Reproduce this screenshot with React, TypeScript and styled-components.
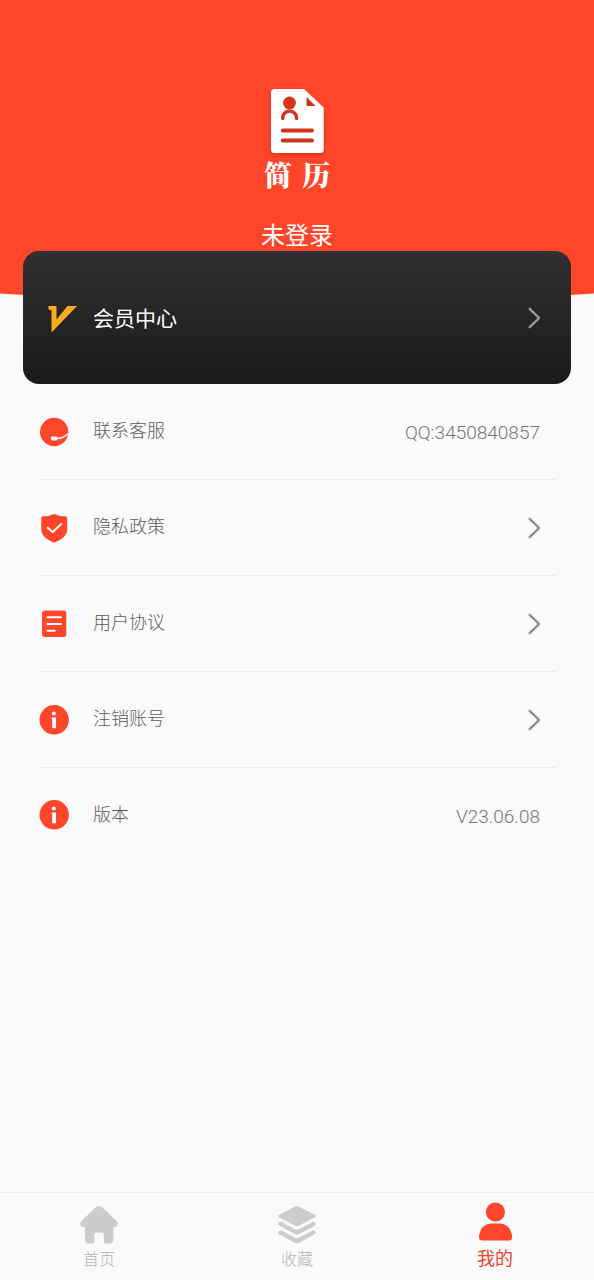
import React from "react";
import styled, { createGlobalStyle } from "styled-components";

const red = "#ff462b";

const GlobalStyle = createGlobalStyle`
  *, *::before, *::after { box-sizing: border-box; }
  body {
    margin: 0;
    background: #fafafa;
    font-family: Roboto, "Noto Sans CJK SC", sans-serif;
  }
  button { font: inherit; border: 0; background: none; cursor: pointer; }
`;

const Page = styled.div`
  min-height: 100vh;
  display: flex;
  flex-direction: column;
`;

const Header = styled.header`
  display: flex;
  flex-direction: column;
  align-items: center;
  padding: 84px 0 52px;
  background: ${red};
  color: #fff;
  clip-path: ellipse(200% 100% at 50% 0);
`;

const Brand = styled.h1`
  display: flex;
  gap: 10px;
  margin: 0 0 30px;
  font: 900 28px/30px "Noto Serif CJK SC", "Noto Serif SC", "Noto Sans CJK SC", serif;
`;

const UserName = styled.div`
  padding-top: 2px;
  font-size: 24px;
  line-height: 30px;
`;

const Main = styled.main`
  flex: 1;
`;

const MemberCard = styled.button`
  position: relative;
  display: flex;
  align-items: center;
  width: calc(100% - 46px);
  height: 133px;
  margin: -52px 23px 0;
  padding: 0 30px 0 24px;
  border-radius: 16px;
  background: linear-gradient(#303030, #1b1b1b);
  color: #fff;
  text-align: left;
`;

const MemberLabel = styled.span`
  flex: 1;
  margin-left: 16px;
  padding-top: 2px;
  font-size: 21px;
  line-height: 32px;
`;

const Menu = styled.ul`
  list-style: none;
  margin: 0;
  padding: 0 38px;
`;

const MenuItem = styled.li`
  height: 96px;
  border-bottom: 1px solid #ebebeb;
  &:last-child { height: 94px; border-bottom: 0; }
`;

const Row = styled.button`
  display: flex;
  align-items: center;
  width: 100%;
  height: 100%;
  padding: 0 15px 0 1px;
  text-align: left;
`;

const RowLabel = styled.span`
  flex: 1;
  margin-left: 24px;
  padding-bottom: 1px;
  color: #5c5c5c;
  font-size: 18px;
  font-weight: 300;
  line-height: 24px;
`;

const RowValue = styled.span`
  padding: 3px 1px 0 0;
  color: #777;
  font-size: 19px;
  font-weight: 300;
  line-height: 24px;
`;

const TabBar = styled.nav`
  position: sticky;
  bottom: 0;
  display: grid;
  grid-template-columns: repeat(3, 1fr);
  height: 88px;
  border-top: 1px solid #eee;
  background: #fafafa;
`;

const Tab = styled.button<{ $active?: boolean }>`
  display: flex;
  flex-direction: column;
  align-items: center;
  justify-content: flex-end;
  gap: ${(p) => (p.$active ? 5 : 3)}px;
  padding: 0 0 ${(p) => (p.$active ? 9 : 8)}px;
  color: ${(p) => (p.$active ? red : "#ccc")};
`;

const TabLabel = styled.span<{ $active?: boolean }>`
  color: ${(p) => (p.$active ? "#e8452f" : "#b4b4b4")};
  font-size: ${(p) => (p.$active ? 18 : 16)}px;
  font-weight: ${(p) => (p.$active ? 400 : 300)};
  line-height: 24px;
`;

const Chevron = ({ color = "#8c8c8c" }: { color?: string }) => (
  <svg width="14" height="22" viewBox="0 0 14 22" fill="none" aria-hidden="true">
    <path d="M2.700 1.800 12.100 11 2.700 20.200" stroke={color} strokeWidth="2.400" strokeLinecap="round" strokeLinejoin="round" />
  </svg>
);

const ResumeLogo = () => (
  <svg width="64" height="75" viewBox="0 0 64 75" aria-hidden="true">
    <defs>
      <filter id="logo-shadow" x="-20%" y="-20%" width="140%" height="140%">
        <feDropShadow dx="0" dy="2" stdDeviation="2" floodColor="#a81d08" floodOpacity=".45" />
      </filter>
    </defs>
    <path
      filter="url(#logo-shadow)"
      fill="#fff"
      d="M9.500 5H39L58.700 23.500V65.500Q58.700 69 55.200 69H9.500Q6 69 6 65.500V8.500Q6 5 9.500 5Z"
    />
    <path d="M41.500 13V22H50.500Z" fill="#cf321d" />
    <circle cx="24.500" cy="19" r="6.400" fill="#d7331b" />
    <path d="M17.700 34.500V34a6.900 7 0 0 1 13.800 0v.5" fill="none" stroke="#d7331b" strokeWidth="3.400" strokeLinecap="round" />
    <path d="M17.700 46.500H47M17.700 56.500H47" stroke="#cf321d" strokeWidth="3.800" strokeLinecap="round" />
  </svg>
);

const MemberIcon = () => (
  <svg width="30" height="30" viewBox="0 0 30 30" aria-hidden="true">
    <path d="M1.300 3H9.500V16.500L20.500 3H30L4.500 29.500V7H1.900Z" fill="#fbab1c" />
  </svg>
);

const IconFrame = ({ children }: { children: React.ReactNode }) => (
  <svg width="30" height="30" viewBox="0 0 30 30" fill="none" aria-hidden="true">
    {children}
  </svg>
);

const ServiceIcon = () => (
  <IconFrame>
    <circle cx="15.200" cy="15" r="14.200" fill={red} />
    <path d="M17.500 21.600C22 21.600 26 19.600 29.500 16.500" stroke="#fff" strokeWidth="1.500" />
    <rect x="12" y="19.600" width="6.500" height="3.800" rx="1.400" fill="#fff" />
  </IconFrame>
);

const ShieldIcon = () => (
  <IconFrame>
    <path
      d="M13.400 1.400Q15.200.4 17 1.400 21 3.500 26.500 3.200 28.200 3.200 28.200 5V16C28.200 22 23.500 26 17 29Q15.200 29.800 13.400 29C7 26 2.200 22 2.200 16V5Q2.200 3.200 3.900 3.200 9.400 3.500 13.400 1.400Z"
      fill={red}
    />
    <path d="M8.700 14.700 13.700 19 22.300 11" stroke="#fff" strokeWidth="1.900" strokeLinecap="round" strokeLinejoin="round" />
  </IconFrame>
);

const DocumentIcon = () => (
  <IconFrame>
    <rect x="3" y="1.500" width="24.300" height="26.500" rx="3" fill={red} />
    <path d="M8.500 8.300H22M8.500 15H22M8.500 21.700H15.800" stroke="#fff" strokeWidth="2" strokeLinecap="round" />
  </IconFrame>
);

const InfoIcon = () => (
  <IconFrame>
    <circle cx="15.200" cy="14.800" r="14.700" fill={red} />
    <circle cx="14.800" cy="8.400" r="2" fill="#fff" />
    <path d="M12.600 12.500H17V23.300H13.200V14H12.600Z" fill="#fff" />
  </IconFrame>
);

const HomeIcon = () => (
  <svg width="40" height="40" viewBox="0 0 40 40" fill="currentColor" aria-hidden="true">
    <path d="M16.800 2.200Q20 .3 23.200 2.200L37.800 16.200Q39.600 18 38.400 20.200 37.600 21.800 35.500 22H34.400V34.500Q34.400 38.500 30.500 38.500H26.500Q24.800 38.500 24.800 36.800V29.500Q24.800 27.500 22.800 27.500H17.200Q15.400 27.500 15.400 29.500V36.800Q15.400 38.500 13.700 38.500H10Q6 38.500 6 34.500V22H4.500Q2.400 21.800 1.500 20.200.3 18 2.200 16.200Z" />
  </svg>
);

const LayersIcon = () => (
  <svg width="40" height="40" viewBox="0 0 40 40" fill="currentColor" aria-hidden="true">
    <path d="M17.800 1.700Q20 .6 22.200 1.700L37.800 9.800Q39.800 11 37.800 12.200L22.200 20.500Q20 21.700 17.800 20.500L2.200 12.200Q.2 11 2.200 9.800Z" />
    <path d="M2 17.300 4.500 16.900 17.600 23.900Q20 25.200 22.400 23.900L35.500 16.900 38 17.300Q39.800 19 38 20.400L22.400 29Q20 30.200 17.600 29L2 20.400Q.2 19 2 17.300Z" />
    <path d="M2 25.900 4.500 25.500 17.600 32.500Q20 33.800 22.400 32.500L35.500 25.500 38 25.900Q39.800 27.600 38 29L22.400 37.700Q20 38.900 17.600 37.700L2 29Q.2 27.600 2 25.900Z" />
  </svg>
);

const PersonIcon = () => (
  <svg width="40" height="40" viewBox="0 0 40 40" fill="currentColor" aria-hidden="true">
    <circle cx="20.400" cy="10" r="9.600" />
    <path d="M16 21.500H25Q35 22 37 33.500V35.500Q37 38.500 34 38.500H7Q4 38.500 4 35.500V33.500Q6 22 16 21.500Z" />
  </svg>
);

const menu = [
  { label: "联系客服", icon: <ServiceIcon />, value: "QQ:3450840857", action: true },
  { label: "隐私政策", icon: <ShieldIcon />, action: true },
  { label: "用户协议", icon: <DocumentIcon />, action: true },
  { label: "注销账号", icon: <InfoIcon />, action: true },
  { label: "版本", icon: <InfoIcon />, value: "V23.06.08", action: false },
];

const tabs = [
  { label: "首页", icon: <HomeIcon />, active: false },
  { label: "收藏", icon: <LayersIcon />, active: false },
  { label: "我的", icon: <PersonIcon />, active: true },
];

export default function App() {
  return (
    <Page>
      <GlobalStyle />
      <Header>
        <ResumeLogo />
        <Brand>
          <span>简</span>
          <span>历</span>
        </Brand>
        <UserName>未登录</UserName>
      </Header>
      <Main>
        <MemberCard type="button">
          <MemberIcon />
          <MemberLabel>会员中心</MemberLabel>
          <Chevron color="#999" />
        </MemberCard>
        <Menu>
          {menu.map((item) => (
            <MenuItem key={item.label}>
              <Row as={item.action ? "button" : "div"}>
                {item.icon}
                <RowLabel>{item.label}</RowLabel>
                {item.value ? <RowValue>{item.value}</RowValue> : <Chevron />}
              </Row>
            </MenuItem>
          ))}
        </Menu>
      </Main>
      <TabBar>
        {tabs.map((tab) => (
          <Tab key={tab.label} type="button" $active={tab.active} aria-current={tab.active ? "page" : undefined}>
            {tab.icon}
            <TabLabel $active={tab.active}>{tab.label}</TabLabel>
          </Tab>
        ))}
      </TabBar>
    </Page>
  );
}
